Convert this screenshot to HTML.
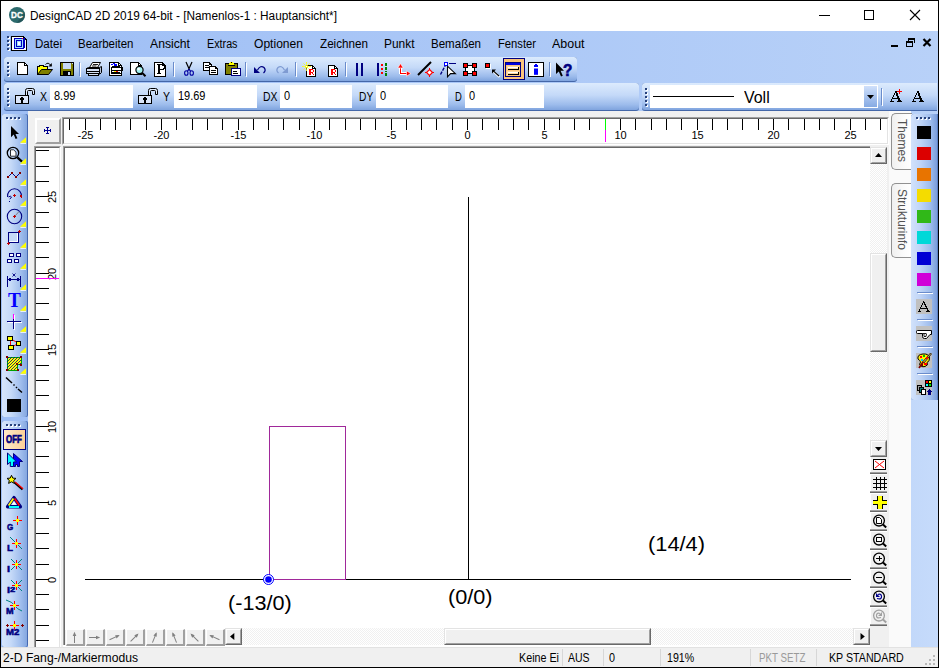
<!DOCTYPE html>
<html><head><meta charset="utf-8"><title>DesignCAD 2D 2019</title>
<style>
html,body{margin:0;padding:0;}
body{width:939px;height:668px;overflow:hidden;position:relative;background:#fff;font-family:"Liberation Sans",sans-serif;}
body div,body svg{position:absolute;box-sizing:border-box;}
.t{white-space:nowrap;}
</style></head>
<body>
<div style="left:0px;top:0px;width:939px;height:668px;background:#000;"></div>
<div style="left:1px;top:1px;width:937px;height:30px;background:#fff;"></div>
<div style="left:1px;top:31px;width:937px;height:636px;background:linear-gradient(90deg,#9ebef5 0%,#b8d1f8 100%);"></div>
<div class="t" style="left:30px;top:9.64px;font:normal 12px/13.40px 'Liberation Sans',sans-serif;color:#000;transform:scaleX(0.9856);transform-origin:0 0;">DesignCAD 2D 2019 64-bit - [Namenlos-1 : Hauptansicht*]</div>
<svg style="left:815px;top:5px;" width="110" height="20" viewBox="0 0 110 20" shape-rendering="crispEdges"><rect x="4" y="10" width="11" height="1" fill="#000"/><rect x="49.5" y="5.5" width="9" height="9" fill="none" stroke="#000" stroke-width="1"/><path d="M95 5 L105 15 M105 5 L95 15" stroke="#000" stroke-width="1.1" fill="none" shape-rendering="auto"/></svg>
<div class="t" style="left:35px;top:37.74px;font:normal 12px/13.40px 'Liberation Sans',sans-serif;color:#000;transform:scaleX(0.9638);transform-origin:0 0;">Datei</div>
<div class="t" style="left:78px;top:37.74px;font:normal 12px/13.40px 'Liberation Sans',sans-serif;color:#000;transform:scaleX(0.9562);transform-origin:0 0;">Bearbeiten</div>
<div class="t" style="left:150px;top:37.74px;font:normal 12px/13.40px 'Liberation Sans',sans-serif;color:#000;transform:scaleX(1.0165);transform-origin:0 0;">Ansicht</div>
<div class="t" style="left:206.5px;top:37.74px;font:normal 12px/13.40px 'Liberation Sans',sans-serif;color:#000;transform:scaleX(0.8968);transform-origin:0 0;">Extras</div>
<div class="t" style="left:253.5px;top:37.74px;font:normal 12px/13.40px 'Liberation Sans',sans-serif;color:#000;transform:scaleX(1.0061);transform-origin:0 0;">Optionen</div>
<div class="t" style="left:319.5px;top:37.74px;font:normal 12px/13.40px 'Liberation Sans',sans-serif;color:#000;transform:scaleX(0.9723);transform-origin:0 0;">Zeichnen</div>
<div class="t" style="left:384px;top:37.74px;font:normal 12px/13.40px 'Liberation Sans',sans-serif;color:#000;transform:scaleX(0.9939);transform-origin:0 0;">Punkt</div>
<div class="t" style="left:431px;top:37.74px;font:normal 12px/13.40px 'Liberation Sans',sans-serif;color:#000;transform:scaleX(0.9611);transform-origin:0 0;">Bemaßen</div>
<div class="t" style="left:497.5px;top:37.74px;font:normal 12px/13.40px 'Liberation Sans',sans-serif;color:#000;transform:scaleX(0.9341);transform-origin:0 0;">Fenster</div>
<div class="t" style="left:551.5px;top:37.74px;font:normal 12px/13.40px 'Liberation Sans',sans-serif;color:#000;transform:scaleX(1.0364);transform-origin:0 0;">About</div>
<svg style="left:888px;top:36px;" width="46" height="14" viewBox="0 0 46 14" shape-rendering="crispEdges"><rect x="3" y="9" width="7" height="2" fill="#000"/><rect x="20" y="2" width="7" height="1" fill="#000"/><rect x="20" y="3" width="7" height="1" fill="#000"/><rect x="20" y="4" width="1" height="2" fill="#000"/><rect x="26" y="4" width="1" height="3" fill="#000"/><rect x="18" y="5" width="7" height="2" fill="#000"/><rect x="18" y="7" width="1" height="4" fill="#000"/><rect x="24" y="7" width="1" height="4" fill="#000"/><rect x="18" y="10" width="7" height="1" fill="#000"/><path d="M35.5 3 L42.5 10 M42.5 3 L35.5 10" stroke="#000" stroke-width="2.2" fill="none" shape-rendering="auto"/></svg>
<svg style="left:8px;top:6px;" width="18" height="18" viewBox="0 0 18 18" shape-rendering="crispEdges"><circle cx="9" cy="9" r="8" fill="#2c6a6c" shape-rendering="auto"/><path d="M9 17 A8 8 0 0 0 16.5 6 L12 12 Z" fill="#1f4f52" opacity=".7" shape-rendering="auto"/></svg>
<div class="t" style="left:11px;top:10.61px;font:bold 8.5px/9.49px 'Liberation Sans',sans-serif;color:#fff;transform:scaleX(0.9612);transform-origin:0 0;-webkit-text-stroke:.3px #fff;">DC</div>
<svg style="left:7px;top:36px;" width="3" height="16" viewBox="0 0 3 16" shape-rendering="crispEdges"><rect x="1" y="1" width="2" height="2" fill="#fff"/><rect x="0" y="0" width="2" height="2" fill="#27417a"/><rect x="1" y="5" width="2" height="2" fill="#fff"/><rect x="0" y="4" width="2" height="2" fill="#27417a"/><rect x="1" y="9" width="2" height="2" fill="#fff"/><rect x="0" y="8" width="2" height="2" fill="#27417a"/><rect x="1" y="13" width="2" height="2" fill="#fff"/><rect x="0" y="12" width="2" height="2" fill="#27417a"/></svg>
<svg style="left:11px;top:35px;" width="17" height="17" viewBox="0 0 17 17" shape-rendering="crispEdges"><path d="M.5 1.5 H12.5 L15.5 4.5 V15.5 H.5 Z" fill="#fff" stroke="#000" stroke-width="1"/><path d="M12.5 1.5 V4.5 H15.5" fill="none" stroke="#000" stroke-width="1"/><rect x="3" y="3" width="10" height="11" fill="#0000c0"/><rect x="4" y="4" width="8" height="9" fill="#a0e0ff"/><rect x="5" y="5" width="6" height="7" fill="#0000c0"/><rect x="6" y="6" width="4" height="5" fill="#a0e0ff"/><rect x="7" y="7" width="2" height="3" fill="#fff"/><rect x="13" y="3" width="1" height="10" fill="#0000c0"/><rect x="11" y="3" width="1" height="1" fill="#ff0000"/></svg>
<div style="left:4px;top:57px;width:573px;height:25px;background:#4467a8;border-radius:3px 3px 3px 3px;"></div>
<div style="left:4px;top:57px;width:573px;height:24px;background:linear-gradient(180deg,#dcebfd 0%,#c4d9f8 45%,#9dbcec 80%,#7fa4de 100%);border-radius:3px 3px 3px 3px;"></div>
<svg style="left:7px;top:62px;" width="3" height="16" viewBox="0 0 3 16" shape-rendering="crispEdges"><rect x="1" y="1" width="2" height="2" fill="#fff"/><rect x="0" y="0" width="2" height="2" fill="#27417a"/><rect x="1" y="5" width="2" height="2" fill="#fff"/><rect x="0" y="4" width="2" height="2" fill="#27417a"/><rect x="1" y="9" width="2" height="2" fill="#fff"/><rect x="0" y="8" width="2" height="2" fill="#27417a"/><rect x="1" y="13" width="2" height="2" fill="#fff"/><rect x="0" y="12" width="2" height="2" fill="#27417a"/></svg>
<div style="left:79px;top:62px;width:1px;height:14px;background:#6a8ccb;"></div>
<div style="left:80px;top:63px;width:1px;height:14px;background:#fff;"></div>
<div style="left:173px;top:62px;width:1px;height:14px;background:#6a8ccb;"></div>
<div style="left:174px;top:63px;width:1px;height:14px;background:#fff;"></div>
<div style="left:245px;top:62px;width:1px;height:14px;background:#6a8ccb;"></div>
<div style="left:246px;top:63px;width:1px;height:14px;background:#fff;"></div>
<div style="left:295px;top:62px;width:1px;height:14px;background:#6a8ccb;"></div>
<div style="left:296px;top:63px;width:1px;height:14px;background:#fff;"></div>
<div style="left:345px;top:62px;width:1px;height:14px;background:#6a8ccb;"></div>
<div style="left:346px;top:63px;width:1px;height:14px;background:#fff;"></div>
<div style="left:549px;top:62px;width:1px;height:14px;background:#6a8ccb;"></div>
<div style="left:550px;top:63px;width:1px;height:14px;background:#fff;"></div>
<svg style="left:15px;top:60px;" width="16" height="18" viewBox="0 0 16 18" shape-rendering="crispEdges"><path d="M2.5 2.5 H9.5 L12.5 5.5 V14.5 H2.5 Z" fill="#fff" stroke="#000" stroke-width="1" shape-rendering="crispEdges"/><path d="M9.5 2.5 V5.5 H12.5" fill="none" stroke="#000" stroke-width="1"/></svg>
<svg style="left:36px;top:60px;" width="18" height="18" viewBox="0 0 18 18" shape-rendering="crispEdges"><path d="M1.5 14.5 V6.5 H3 L4 5.5 H7 L8 6.5 H11.5 V9.5" fill="#ffff00" stroke="#000" stroke-width="1"/><path d="M1.5 14.5 L5.5 9.5 H16.5 L12.5 14.5 Z" fill="#808000" stroke="#000" stroke-width="1" shape-rendering="auto"/><path d="M9.5 4.5 Q12 1.5 15 5.5" fill="none" stroke="#000" stroke-width="1" shape-rendering="auto"/><path d="M15.8 3 V6.6 H12.4 Z" fill="#000" shape-rendering="auto"/></svg>
<svg style="left:59px;top:60px;" width="18" height="18" viewBox="0 0 18 18" shape-rendering="crispEdges"><rect x="1" y="2" width="14" height="14" fill="#000"/><rect x="2" y="3" width="12" height="12" fill="#808000"/><rect x="4" y="3" width="8" height="6" fill="#c6d9f7"/><rect x="13" y="3" width="1" height="1" fill="#c6d9f7"/><rect x="4" y="11" width="8" height="4" fill="#000"/><rect x="9" y="12" width="2" height="3" fill="#c6d9f7"/></svg>
<svg style="left:85px;top:60px;" width="18" height="18" viewBox="0 0 18 18" shape-rendering="crispEdges"><path d="M4.5 7.5 L7.5 2.5 H15.5 L12.5 7.5 Z" fill="#fff" stroke="#000" shape-rendering="auto"/><path d="M8 4.5 H13 M7 6 H11.5" stroke="#000" stroke-width=".9" shape-rendering="auto"/><path d="M1.5 8.5 L3.5 7.5 H14.5 L16.5 6.5 V12.5 L14.5 14.5" fill="#b8c4d8" stroke="#000" shape-rendering="auto"/><rect x="1.5" y="8.5" width="13" height="5" fill="#d4e0f5" stroke="#000"/><rect x="2" y="11" width="12" height="1" fill="#000"/><rect x="3.5" y="13.5" width="10" height="2" fill="#d4e0f5" stroke="#000"/></svg>
<svg style="left:108px;top:60px;" width="18" height="18" viewBox="0 0 18 18" shape-rendering="crispEdges"><path d="M1.5 2.5 H10.5 L13.5 5.5 V15.5 H1.5 Z" fill="#fff" stroke="#000" stroke-width="1" shape-rendering="crispEdges"/><path d="M10.5 2.5 V5.5 H13.5" fill="none" stroke="#000" stroke-width="1"/><rect x="3" y="4" width="2" height="1" fill="#0000ff"/><rect x="5" y="3" width="2" height="1" fill="#0000ff"/><rect x="6" y="4" width="3" height="2" fill="#0000ff"/><rect x="3.5" y="7.5" width="10" height="6" fill="#fff" stroke="#000"/><rect x="4" y="6" width="8" height="1" fill="#000"/><rect x="3" y="10" width="11" height="1" fill="#000"/><rect x="14" y="7" width="1" height="4" fill="#000"/><rect x="4" y="12" width="8" height="1" fill="#000"/><rect x="6" y="11" width="2" height="1" fill="#ffff00"/><rect x="8" y="11" width="2" height="1" fill="#ff0000"/></svg>
<svg style="left:129px;top:60px;" width="20" height="20" viewBox="0 0 20 20" shape-rendering="crispEdges"><path d="M1.5 2.5 H9.5 L12.5 5.5 V14.5 H1.5 Z" fill="#fff" stroke="#000" stroke-width="1" shape-rendering="crispEdges"/><path d="M9.5 2.5 V5.5 H12.5" fill="none" stroke="#000" stroke-width="1"/><circle cx="10.5" cy="10" r="3.6" fill="#a0f0f0" stroke="#000" stroke-width="1.2" shape-rendering="auto"/><circle cx="9.6" cy="9" r="1.3" fill="#fff" shape-rendering="auto"/><path d="M13 12.8 L16.5 16.3" stroke="#000" stroke-width="2" shape-rendering="auto"/></svg>
<svg style="left:152px;top:60px;" width="18" height="20" viewBox="0 0 18 20" shape-rendering="crispEdges"><path d="M2.5 2.5 H10.5 L13.5 5.5 V16.5 H2.5 Z" fill="#fff" stroke="#000" stroke-width="1" shape-rendering="crispEdges"/><path d="M10.5 2.5 V5.5 H13.5" fill="none" stroke="#000" stroke-width="1"/></svg>
<svg style="left:157px;top:64px;" width="9" height="10" viewBox="0 0 9 10" shape-rendering="crispEdges"><rect x="0" y="0" width="7" height="1" fill="#000"/><rect x="1" y="1" width="2" height="1" fill="#000"/><rect x="6" y="1" width="2" height="1" fill="#000"/><rect x="1" y="2" width="2" height="1" fill="#000"/><rect x="7" y="2" width="2" height="1" fill="#000"/><rect x="1" y="3" width="2" height="1" fill="#000"/><rect x="7" y="3" width="2" height="1" fill="#000"/><rect x="1" y="4" width="2" height="1" fill="#000"/><rect x="6" y="4" width="2" height="1" fill="#000"/><rect x="1" y="5" width="6" height="1" fill="#000"/><rect x="1" y="6" width="2" height="1" fill="#000"/><rect x="1" y="7" width="2" height="1" fill="#000"/><rect x="1" y="8" width="2" height="1" fill="#000"/><rect x="0" y="9" width="4" height="1" fill="#000"/></svg>
<svg style="left:182px;top:60px;" width="14" height="18" viewBox="0 0 14 18" shape-rendering="crispEdges"><path d="M4 2 L7.6 10 M10 2 L6.4 10" stroke="#000" stroke-width="1.2" fill="none" shape-rendering="auto"/><ellipse cx="4.3" cy="13" rx="1.7" ry="2.3" fill="none" stroke="#0000a0" stroke-width="1.1" shape-rendering="auto"/><ellipse cx="9.7" cy="13" rx="1.7" ry="2.3" fill="none" stroke="#0000a0" stroke-width="1.1" shape-rendering="auto"/><path d="M5.4 11.2 L7 9.4 L8.6 11.2" stroke="#0000a0" stroke-width="1.1" fill="none" shape-rendering="auto"/></svg>
<svg style="left:202px;top:60px;" width="18" height="18" viewBox="0 0 18 18" shape-rendering="crispEdges"><path d="M1.5 2.5 H7.5 L9.5 4.5 V10.5 H1.5 Z" fill="#fff" stroke="#000" stroke-width="1" shape-rendering="crispEdges"/><path d="M7.5 2.5 V4.5 H9.5" fill="none" stroke="#000" stroke-width="1"/><rect x="3" y="5" width="4" height="1" fill="#000"/><rect x="3" y="7" width="4" height="1" fill="#000"/><path d="M7.5 6.5 H13.5 L15.5 8.5 V14.5 H7.5 Z" fill="#fff" stroke="#000" stroke-width="1" shape-rendering="crispEdges"/><path d="M13.5 6.5 V8.5 H15.5" fill="none" stroke="#000" stroke-width="1"/><rect x="9" y="10" width="5" height="1" fill="#000"/><rect x="9" y="12" width="5" height="1" fill="#000"/></svg>
<svg style="left:224px;top:60px;" width="18" height="18" viewBox="0 0 18 18" shape-rendering="crispEdges"><rect x="1.5" y="3.5" width="12" height="11" rx="1" fill="#808000" stroke="#000"/><rect x="5" y="3" width="5" height="2" fill="#ffff00"/><rect x="6" y="2" width="3" height="1" fill="#ffff00"/><rect x="4" y="5" width="7" height="1" fill="#000"/><rect x="7" y="2" width="1" height="1" fill="#000"/><rect x="7.5" y="8.5" width="9" height="7" fill="#fff" stroke="#000080"/><rect x="9" y="11" width="4" height="1" fill="#000"/><rect x="9" y="13" width="5" height="1" fill="#000"/></svg>
<svg style="left:252px;top:63px;" width="16" height="12" viewBox="0 0 16 12" shape-rendering="crispEdges"><path d="M2 4 V10 H8 Z" fill="#000080" shape-rendering="auto"/><path d="M5.5 7 Q8.5 1.8 12 4.5 Q14.5 7.5 11.5 10" fill="none" stroke="#000080" stroke-width="1.25" shape-rendering="auto"/></svg>
<svg style="left:274px;top:63px;" width="16" height="12" viewBox="0 0 16 12" shape-rendering="crispEdges"><path d="M14 4 V10 H8 Z" fill="#7f9bd2" shape-rendering="auto"/><path d="M10.5 7 Q7.5 1.8 4 4.5 Q1.5 7.5 4.5 10" fill="none" stroke="#7f9bd2" stroke-width="1.25" shape-rendering="auto"/></svg>
<svg style="left:300px;top:60px;" width="20" height="20" viewBox="0 0 20 20" shape-rendering="crispEdges"><path d="M6.5 5.5 H12.5 L15.5 8.5 V16.5 H6.5 Z" fill="#fff" stroke="#000" stroke-width="1" shape-rendering="crispEdges"/><path d="M12.5 5.5 V8.5 H15.5" fill="none" stroke="#000" stroke-width="1"/><path d="M3.5 3.5 L9.5 9.5 M6.5 2 V11 M2 6.5 H11 M9.5 3.5 L3.5 9.5" stroke="#ffff00" stroke-width=".9" stroke-dasharray="1.8 .6" shape-rendering="auto"/><rect x="6" y="6" width="1" height="1" fill="#fff"/></svg>
<svg style="left:309px;top:69px;" width="5" height="6" viewBox="0 0 5 6" shape-rendering="crispEdges"><rect x="0" y="0" width="4" height="1" fill="#ff0000"/><rect x="0" y="1" width="2" height="1" fill="#ff0000"/><rect x="4" y="1" width="1" height="1" fill="#ff0000"/><rect x="0" y="2" width="2" height="1" fill="#ff0000"/><rect x="4" y="2" width="1" height="1" fill="#ff0000"/><rect x="0" y="3" width="4" height="1" fill="#ff0000"/><rect x="0" y="4" width="2" height="1" fill="#ff0000"/><rect x="3" y="4" width="1" height="1" fill="#ff0000"/><rect x="0" y="5" width="2" height="1" fill="#ff0000"/><rect x="4" y="5" width="1" height="1" fill="#ff0000"/></svg>
<svg style="left:326px;top:60px;" width="16" height="20" viewBox="0 0 16 20" shape-rendering="crispEdges"><path d="M2.5 5.5 H8.5 L11.5 8.5 V16.5 H2.5 Z" fill="#fff" stroke="#000" stroke-width="1" shape-rendering="crispEdges"/><path d="M8.5 5.5 V8.5 H11.5" fill="none" stroke="#000" stroke-width="1"/></svg>
<svg style="left:331px;top:69px;" width="5" height="6" viewBox="0 0 5 6" shape-rendering="crispEdges"><rect x="0" y="0" width="4" height="1" fill="#ff0000"/><rect x="0" y="1" width="2" height="1" fill="#ff0000"/><rect x="4" y="1" width="1" height="1" fill="#ff0000"/><rect x="0" y="2" width="2" height="1" fill="#ff0000"/><rect x="4" y="2" width="1" height="1" fill="#ff0000"/><rect x="0" y="3" width="4" height="1" fill="#ff0000"/><rect x="0" y="4" width="2" height="1" fill="#ff0000"/><rect x="3" y="4" width="1" height="1" fill="#ff0000"/><rect x="0" y="5" width="2" height="1" fill="#ff0000"/><rect x="4" y="5" width="1" height="1" fill="#ff0000"/></svg>
<svg style="left:355px;top:62px;" width="10" height="15" viewBox="0 0 10 15" shape-rendering="crispEdges"><rect x="1" y="1" width="2" height="13" fill="#000080"/><rect x="6" y="1" width="2" height="13" fill="#000080"/></svg>
<svg style="left:376px;top:62px;" width="14" height="15" viewBox="0 0 14 15" shape-rendering="crispEdges"><rect x="1" y="1" width="2" height="13" fill="#000080"/><rect x="5" y="2" width="2" height="2" fill="#ff0000"/><rect x="5" y="6" width="2" height="2" fill="#ff0000"/><rect x="5" y="10" width="2" height="2" fill="#ff0000"/><rect x="9" y="1" width="2" height="3" fill="#008000"/><rect x="9" y="5" width="2" height="3" fill="#008000"/><rect x="9" y="9" width="2" height="1" fill="#008000"/><rect x="9" y="11" width="2" height="3" fill="#008000"/></svg>
<svg style="left:396px;top:62px;" width="18" height="18" viewBox="0 0 18 18" shape-rendering="crispEdges"><path d="M4 11.5 H13 M4.5 3 V12" stroke="#fff" stroke-width="3" fill="none"/><path d="M4.5 3 V11.5 H12" stroke="#ff0000" stroke-width="1.4" fill="none"/><path d="M4.5 1.5 L1.8 6 H7.2 Z M14.8 11.5 L10.5 8.8 V14.2 Z" fill="#ff0000" stroke="#fff" stroke-width=".6" shape-rendering="auto"/></svg>
<svg style="left:416px;top:60px;" width="20" height="18" viewBox="0 0 20 18" shape-rendering="crispEdges"><path d="M2 15 L15 2" stroke="#000" stroke-width="2" shape-rendering="auto"/><path d="M13.5 8 V17 M9 12.5 H18" stroke="#ff0000" stroke-width="1" /><path d="M13.5 9.5 L16.5 12.5 L13.5 15.5 L10.5 12.5 Z" fill="#fff" stroke="#ff0000" stroke-width="1.2" shape-rendering="auto"/></svg>
<svg style="left:438px;top:60px;" width="20" height="18" viewBox="0 0 20 18" shape-rendering="crispEdges"><path d="M2.5 14.5 L7.3 5.5" stroke="#000080" stroke-width="1.4" stroke-dasharray="3.2 1.2" shape-rendering="auto"/><rect x="6.5" y="2.5" width="3" height="3" fill="#fff" stroke="#0000ff"/><rect x="11" y="3" width="7" height="1" fill="#000080"/><path d="M9.5 6.2 V16.8 L12.6 13.6 H17.4 Z" fill="#fff" stroke="#000" stroke-width="1.1" stroke-linejoin="miter" shape-rendering="auto"/></svg>
<svg style="left:462px;top:62px;" width="16" height="15" viewBox="0 0 16 15" shape-rendering="crispEdges"><rect x="3.5" y="3.5" width="9" height="8" fill="#fff" stroke="#000" stroke-width="1"/><rect x="1.5" y="1.5" width="4" height="4" fill="#ff0000" stroke="#000"/><rect x="10.5" y="1.5" width="4" height="4" fill="#ff0000" stroke="#000"/><rect x="1.5" y="9.5" width="4" height="4" fill="#ff0000" stroke="#000"/><rect x="10.5" y="9.5" width="4" height="4" fill="#ff0000" stroke="#000"/></svg>
<svg style="left:483px;top:62px;" width="18" height="16" viewBox="0 0 18 16" shape-rendering="crispEdges"><rect x="2.5" y="1.5" width="4" height="4" fill="#ff0000" stroke="#000"/><path d="M3 6.5 H7.5 V2" stroke="#fff" stroke-width="1" fill="none"/><path d="M10.5 9.5 L16.5 15" stroke="#fff" stroke-width="2" shape-rendering="auto"/><path d="M10 8.6 L16 14" stroke="#000" stroke-width="1.1" shape-rendering="auto"/><path d="M9 7.6 H13 L9 11.4 Z" fill="#000" shape-rendering="auto"/></svg>
<div style="left:503px;top:58px;width:22px;height:22px;background:#fbc57d;border:1px solid #000080;"></div>
<svg style="left:504px;top:60px;" width="19" height="18" viewBox="0 0 19 18" shape-rendering="crispEdges"><rect x="1" y="2" width="16" height="15" fill="#000080"/><rect x="2" y="3" width="14" height="2" fill="#0000e0"/><rect x="2" y="5" width="14" height="11" fill="#fbc57d"/><rect x="3" y="6" width="12" height="4" fill="#fdd8a0"/><rect x="3" y="11" width="12" height="4" fill="#fdd8a0"/><rect x="4" y="9" width="11" height="1" fill="#000"/><rect x="14" y="7" width="1" height="3" fill="#000"/><rect x="4" y="14" width="11" height="1" fill="#000"/><rect x="14" y="12" width="1" height="3" fill="#000"/><rect x="4" y="7" width="10" height="1" fill="#fff"/><rect x="4" y="12" width="10" height="1" fill="#fff"/></svg>
<svg style="left:527px;top:61px;" width="18" height="17" viewBox="0 0 18 17" shape-rendering="crispEdges"><rect x="1.5" y="1.5" width="15" height="14" fill="#fff" stroke="#000"/><rect x="8" y="3" width="2" height="1" fill="#0000ff"/><rect x="7" y="4" width="4" height="2" fill="#0000ff"/><rect x="7" y="7.5" width="4" height="6.3" fill="#0000ff" shape-rendering="auto"/></svg>
<svg style="left:554px;top:61px;" width="12" height="18" viewBox="0 0 12 18" shape-rendering="crispEdges"><path d="M2 1.5 V13 L4.8 10.5 L7 15.5 L8.8 14.7 L6.6 9.8 H10 Z" fill="#000" shape-rendering="auto"/></svg>
<div class="t" style="left:562.8px;top:60.97px;font:bold 16.5px/18.43px 'Liberation Sans',sans-serif;color:#000080;transform:scaleX(0.9326);transform-origin:0 0;-webkit-text-stroke:.6px #000080;">?</div>
<div style="left:4px;top:83px;width:635px;height:28px;background:#4467a8;border-radius:3px 3px 3px 3px;"></div>
<div style="left:4px;top:83px;width:635px;height:27px;background:linear-gradient(180deg,#dcebfd 0%,#c4d9f8 45%,#9dbcec 80%,#7fa4de 100%);border-radius:3px 3px 3px 3px;"></div>
<svg style="left:7px;top:88px;" width="3" height="20" viewBox="0 0 3 20" shape-rendering="crispEdges"><rect x="1" y="1" width="2" height="2" fill="#fff"/><rect x="0" y="0" width="2" height="2" fill="#27417a"/><rect x="1" y="5" width="2" height="2" fill="#fff"/><rect x="0" y="4" width="2" height="2" fill="#27417a"/><rect x="1" y="9" width="2" height="2" fill="#fff"/><rect x="0" y="8" width="2" height="2" fill="#27417a"/><rect x="1" y="13" width="2" height="2" fill="#fff"/><rect x="0" y="12" width="2" height="2" fill="#27417a"/><rect x="1" y="17" width="2" height="2" fill="#fff"/><rect x="0" y="16" width="2" height="2" fill="#27417a"/></svg>
<svg style="left:14px;top:87px;" width="23" height="18" viewBox="0 0 23 18" shape-rendering="crispEdges"><path d="M11.5 8 V3.5 Q11.5 1.5 13.5 1.5 H18.5 Q20.5 1.5 20.5 3.5 V7.5 H18.5 V4.5 Q18.5 3.5 17.5 3.5 H14.5 Q13.5 3.5 13.5 4.5 V8" fill="#e4edfb" stroke="#000" stroke-width="1" shape-rendering="auto"/><rect x="1.5" y="8.5" width="13" height="8" fill="#dbe6f9" stroke="#000" stroke-width="1"/><rect x="7" y="10" width="2" height="1" fill="#000"/><rect x="6" y="11" width="4" height="2" fill="#000"/><rect x="7" y="13" width="2" height="3" fill="#000"/></svg>
<svg style="left:137px;top:87px;" width="23" height="18" viewBox="0 0 23 18" shape-rendering="crispEdges"><path d="M11.5 8 V3.5 Q11.5 1.5 13.5 1.5 H18.5 Q20.5 1.5 20.5 3.5 V7.5 H18.5 V4.5 Q18.5 3.5 17.5 3.5 H14.5 Q13.5 3.5 13.5 4.5 V8" fill="#e4edfb" stroke="#000" stroke-width="1" shape-rendering="auto"/><rect x="1.5" y="8.5" width="13" height="8" fill="#dbe6f9" stroke="#000" stroke-width="1"/><rect x="7" y="10" width="2" height="1" fill="#000"/><rect x="6" y="11" width="4" height="2" fill="#000"/><rect x="7" y="13" width="2" height="3" fill="#000"/></svg>
<div class="t" style="left:40px;top:90.74px;font:normal 12px/13.40px 'Liberation Sans',sans-serif;color:#000;transform:scaleX(0.8746);transform-origin:0 0;">X</div>
<div style="left:50px;top:85px;width:83px;height:23px;background:#fff;"></div>
<div class="t" style="left:53.5px;top:89.74px;font:normal 12px/13.40px 'Liberation Sans',sans-serif;color:#000;transform:scaleX(0.9150);transform-origin:0 0;">8.99</div>
<div class="t" style="left:163px;top:90.74px;font:normal 12px/13.40px 'Liberation Sans',sans-serif;color:#000;transform:scaleX(0.8746);transform-origin:0 0;">Y</div>
<div style="left:174px;top:85px;width:83px;height:23px;background:#fff;"></div>
<div class="t" style="left:177.5px;top:89.74px;font:normal 12px/13.40px 'Liberation Sans',sans-serif;color:#000;transform:scaleX(0.9150);transform-origin:0 0;">19.69</div>
<div class="t" style="left:262.8px;top:90.74px;font:normal 12px/13.40px 'Liberation Sans',sans-serif;color:#000;transform:scaleX(0.8638);transform-origin:0 0;">DX</div>
<div style="left:280px;top:85px;width:72px;height:23px;background:#fff;"></div>
<div class="t" style="left:283.5px;top:89.74px;font:normal 12px/13.40px 'Liberation Sans',sans-serif;color:#000;transform:scaleX(0.9150);transform-origin:0 0;">0</div>
<div class="t" style="left:358.8px;top:90.74px;font:normal 12px/13.40px 'Liberation Sans',sans-serif;color:#000;transform:scaleX(0.8518);transform-origin:0 0;">DY</div>
<div style="left:376px;top:85px;width:72px;height:23px;background:#fff;"></div>
<div class="t" style="left:379.5px;top:89.74px;font:normal 12px/13.40px 'Liberation Sans',sans-serif;color:#000;transform:scaleX(0.9150);transform-origin:0 0;">0</div>
<div class="t" style="left:454.7px;top:90.74px;font:normal 12px/13.40px 'Liberation Sans',sans-serif;color:#000;transform:scaleX(0.7847);transform-origin:0 0;">D</div>
<div style="left:465px;top:85px;width:79px;height:23px;background:#fff;"></div>
<div class="t" style="left:468.5px;top:89.74px;font:normal 12px/13.40px 'Liberation Sans',sans-serif;color:#000;transform:scaleX(0.9150);transform-origin:0 0;">0</div>
<div style="left:642px;top:83px;width:295px;height:28px;background:#4467a8;border-radius:3px 0px 0px 3px;"></div>
<div style="left:642px;top:83px;width:295px;height:27px;background:linear-gradient(180deg,#dcebfd 0%,#c4d9f8 45%,#9dbcec 80%,#7fa4de 100%);border-radius:3px 0px 0px 3px;"></div>
<svg style="left:645px;top:88px;" width="3" height="20" viewBox="0 0 3 20" shape-rendering="crispEdges"><rect x="1" y="1" width="2" height="2" fill="#fff"/><rect x="0" y="0" width="2" height="2" fill="#27417a"/><rect x="1" y="5" width="2" height="2" fill="#fff"/><rect x="0" y="4" width="2" height="2" fill="#27417a"/><rect x="1" y="9" width="2" height="2" fill="#fff"/><rect x="0" y="8" width="2" height="2" fill="#27417a"/><rect x="1" y="13" width="2" height="2" fill="#fff"/><rect x="0" y="12" width="2" height="2" fill="#27417a"/><rect x="1" y="17" width="2" height="2" fill="#fff"/><rect x="0" y="16" width="2" height="2" fill="#27417a"/></svg>
<div style="left:650px;top:85px;width:228px;height:23px;background:#fff;"></div>
<div style="left:653px;top:96px;width:81px;height:1px;background:#000;"></div>
<div class="t" style="left:744px;top:88.72px;font:normal 16px/17.87px 'Liberation Sans',sans-serif;color:#000;transform:scaleX(0.9962);transform-origin:0 0;">Voll</div>
<div style="left:864px;top:86px;width:13px;height:21px;background:linear-gradient(180deg,#cfe0fb,#86aae3);"></div>
<svg style="left:866px;top:94px;" width="9" height="6" viewBox="0 0 9 6" shape-rendering="crispEdges"><path d="M1 1 H8 L4.5 5 Z" fill="#000" shape-rendering="auto"/></svg>
<div style="left:881px;top:88px;width:1px;height:17px;background:#6a8ccb;"></div>
<div style="left:882px;top:89px;width:1px;height:17px;background:#fff;"></div>
<svg style="left:890px;top:91px;" width="12" height="11" viewBox="0 0 12 11" shape-rendering="crispEdges"><rect x="5" y="0" width="2" height="1" fill="#000"/><rect x="5" y="1" width="2" height="1" fill="#000"/><rect x="4" y="2" width="1" height="1" fill="#000"/><rect x="6" y="2" width="2" height="1" fill="#000"/><rect x="4" y="3" width="1" height="1" fill="#000"/><rect x="6" y="3" width="2" height="1" fill="#000"/><rect x="3" y="4" width="1" height="1" fill="#000"/><rect x="6" y="4" width="2" height="1" fill="#000"/><rect x="3" y="5" width="1" height="1" fill="#000"/><rect x="7" y="5" width="2" height="1" fill="#000"/><rect x="2" y="6" width="1" height="1" fill="#000"/><rect x="7" y="6" width="2" height="1" fill="#000"/><rect x="2" y="7" width="8" height="1" fill="#000"/><rect x="1" y="8" width="1" height="1" fill="#000"/><rect x="8" y="8" width="2" height="1" fill="#000"/><rect x="1" y="9" width="1" height="1" fill="#000"/><rect x="8" y="9" width="3" height="1" fill="#000"/><rect x="0" y="10" width="4" height="1" fill="#000"/><rect x="7" y="10" width="5" height="1" fill="#000"/></svg>
<svg style="left:897px;top:89px;" width="5" height="5" viewBox="0 0 5 5" shape-rendering="crispEdges"><rect x="2" y="0" width="1" height="5" fill="#ff0000"/><rect x="0" y="2" width="5" height="1" fill="#ff0000"/></svg>
<svg style="left:912px;top:91px;" width="12" height="11" viewBox="0 0 12 11" shape-rendering="crispEdges"><rect x="5" y="0" width="2" height="1" fill="#000"/><rect x="5" y="1" width="2" height="1" fill="#000"/><rect x="4" y="2" width="1" height="1" fill="#000"/><rect x="6" y="2" width="2" height="1" fill="#000"/><rect x="4" y="3" width="1" height="1" fill="#000"/><rect x="6" y="3" width="2" height="1" fill="#000"/><rect x="3" y="4" width="1" height="1" fill="#000"/><rect x="6" y="4" width="2" height="1" fill="#000"/><rect x="3" y="5" width="1" height="1" fill="#000"/><rect x="7" y="5" width="2" height="1" fill="#000"/><rect x="2" y="6" width="1" height="1" fill="#000"/><rect x="7" y="6" width="2" height="1" fill="#000"/><rect x="2" y="7" width="8" height="1" fill="#000"/><rect x="1" y="8" width="1" height="1" fill="#000"/><rect x="8" y="8" width="2" height="1" fill="#000"/><rect x="1" y="9" width="1" height="1" fill="#000"/><rect x="8" y="9" width="3" height="1" fill="#000"/><rect x="0" y="10" width="4" height="1" fill="#000"/><rect x="7" y="10" width="5" height="1" fill="#000"/></svg>
<div style="left:2px;top:114px;width:26px;height:303px;background:#4468b0;border-radius:2px;"></div>
<div style="left:2px;top:114px;width:25px;height:303px;background:linear-gradient(90deg,#d6e5fb 0%,#c6daf8 35%,#a3c0ee 72%,#84a7e0 100%);border-radius:2px;"></div>
<svg style="left:6px;top:117px;" width="16" height="3" viewBox="0 0 16 3" shape-rendering="crispEdges"><rect x="1" y="1" width="2" height="2" fill="#fff"/><rect x="0" y="0" width="2" height="2" fill="#27417a"/><rect x="5" y="1" width="2" height="2" fill="#fff"/><rect x="4" y="0" width="2" height="2" fill="#27417a"/><rect x="9" y="1" width="2" height="2" fill="#fff"/><rect x="8" y="0" width="2" height="2" fill="#27417a"/><rect x="13" y="1" width="2" height="2" fill="#fff"/><rect x="12" y="0" width="2" height="2" fill="#27417a"/></svg>
<svg style="left:9px;top:124px;" width="12" height="18" viewBox="0 0 12 18" shape-rendering="crispEdges"><path d="M2 2 V13.2 L4.7 10.6 L6.6 15 L8.4 14.2 L6.5 10 H10 Z" fill="#000" shape-rendering="auto"/></svg>
<svg style="left:19px;top:137px;" width="8" height="8" viewBox="0 0 8 8" shape-rendering="crispEdges"><path d="M7 6.3 H1.4" stroke="#fff" stroke-width="1" shape-rendering="auto"/><path d="M7 0.3 V5.8 H1 Z" fill="#ffff00" shape-rendering="auto"/></svg>
<svg style="left:5px;top:145px;" width="20" height="20" viewBox="0 0 20 20" shape-rendering="crispEdges"><circle cx="8" cy="8" r="5.7" fill="none" stroke="#000" stroke-width="1.3" shape-rendering="auto"/><path d="M5.5 4.8 H8.6 L11 7.2 V11.2 H5.5 Z" fill="#fff" stroke="#000" stroke-width=".8" shape-rendering="auto"/><path d="M12.3 12.3 L17 16.6" stroke="#000" stroke-width="2.3" shape-rendering="auto"/></svg>
<svg style="left:19px;top:158px;" width="8" height="8" viewBox="0 0 8 8" shape-rendering="crispEdges"><path d="M7 6.3 H1.4" stroke="#fff" stroke-width="1" shape-rendering="auto"/><path d="M7 0.3 V5.8 H1 Z" fill="#ffff00" shape-rendering="auto"/></svg>
<svg style="left:4px;top:169px;" width="20" height="12" viewBox="0 0 20 12" shape-rendering="crispEdges"><path d="M4 8 L8 4 L12 8 L16 4" fill="none" stroke="#000080" stroke-width="1" shape-rendering="auto"/><rect x="3" y="7" width="2" height="2" fill="#800000"/><rect x="7" y="3" width="2" height="2" fill="#800000"/><rect x="11" y="7" width="2" height="2" fill="#800000"/><rect x="15" y="3" width="2" height="2" fill="#800000"/></svg>
<svg style="left:19px;top:179px;" width="8" height="8" viewBox="0 0 8 8" shape-rendering="crispEdges"><path d="M7 6.3 H1.4" stroke="#fff" stroke-width="1" shape-rendering="auto"/><path d="M7 0.3 V5.8 H1 Z" fill="#ffff00" shape-rendering="auto"/></svg>
<svg style="left:5px;top:186px;" width="20" height="18" viewBox="0 0 20 18" shape-rendering="crispEdges"><path d="M2.6 11 A7 7 0 1 1 16.4 11" fill="none" stroke="#000080" stroke-width="1.1" shape-rendering="auto"/><rect x="9" y="8" width="1" height="3" fill="#c00000"/><rect x="8" y="9" width="3" height="1" fill="#c00000"/><rect x="15" y="9" width="2" height="2" fill="#c00000"/><rect x="16" y="10" width="1" height="2" fill="#c00000"/><path d="M3.5 11 Q5.5 9.3 6.5 11 L4.8 13.2" fill="none" stroke="#000080" stroke-width="1" shape-rendering="auto"/><rect x="4" y="15" width="1" height="1" fill="#000080"/></svg>
<svg style="left:19px;top:200px;" width="8" height="8" viewBox="0 0 8 8" shape-rendering="crispEdges"><path d="M7 6.3 H1.4" stroke="#fff" stroke-width="1" shape-rendering="auto"/><path d="M7 0.3 V5.8 H1 Z" fill="#ffff00" shape-rendering="auto"/></svg>
<svg style="left:5px;top:207px;" width="20" height="20" viewBox="0 0 20 20" shape-rendering="crispEdges"><circle cx="9.5" cy="9.5" r="7.2" fill="none" stroke="#000080" stroke-width="1.1" shape-rendering="auto"/><path d="M10 9 L14 4.5" stroke="#808080" stroke-width="1" shape-rendering="auto"/><rect x="9" y="8" width="1" height="3" fill="#c00000"/><rect x="8" y="9" width="3" height="1" fill="#c00000"/></svg>
<svg style="left:19px;top:221px;" width="8" height="8" viewBox="0 0 8 8" shape-rendering="crispEdges"><path d="M7 6.3 H1.4" stroke="#fff" stroke-width="1" shape-rendering="auto"/><path d="M7 0.3 V5.8 H1 Z" fill="#ffff00" shape-rendering="auto"/></svg>
<svg style="left:5px;top:229px;" width="20" height="18" viewBox="0 0 20 18" shape-rendering="crispEdges"><rect x="5" y="5" width="9" height="9" fill="#fff"/><rect x="3.5" y="3.5" width="10" height="10" fill="none" stroke="#000080" stroke-width="1"/><rect x="4" y="4" width="9" height="9" fill="#c6d9f7"/><rect x="4" y="12" width="9" height="1" fill="#fff"/><rect x="12" y="4" width="1" height="9" fill="#fff"/><rect x="14" y="1" width="1" height="3" fill="#c00000"/><rect x="13" y="2" width="3" height="1" fill="#c00000"/><rect x="3" y="13" width="1" height="3" fill="#c00000"/><rect x="2" y="14" width="3" height="1" fill="#c00000"/></svg>
<svg style="left:19px;top:242px;" width="8" height="8" viewBox="0 0 8 8" shape-rendering="crispEdges"><path d="M7 6.3 H1.4" stroke="#fff" stroke-width="1" shape-rendering="auto"/><path d="M7 0.3 V5.8 H1 Z" fill="#ffff00" shape-rendering="auto"/></svg>
<svg style="left:5px;top:251px;" width="20" height="14" viewBox="0 0 20 14" shape-rendering="crispEdges"><rect x="4.5" y="2.5" width="4" height="3" fill="#fff" stroke="#000080"/><rect x="11.5" y="2.5" width="4" height="3" fill="#fff" stroke="#000080"/><rect x="2.5" y="8.5" width="4" height="3" fill="#fff" stroke="#000080"/><rect x="9.5" y="8.5" width="4" height="3" fill="#fff" stroke="#000080"/></svg>
<svg style="left:19px;top:263px;" width="8" height="8" viewBox="0 0 8 8" shape-rendering="crispEdges"><path d="M7 6.3 H1.4" stroke="#fff" stroke-width="1" shape-rendering="auto"/><path d="M7 0.3 V5.8 H1 Z" fill="#ffff00" shape-rendering="auto"/></svg>
<svg style="left:5px;top:272px;" width="20" height="16" viewBox="0 0 20 16" shape-rendering="crispEdges"><rect x="2" y="4" width="1" height="11" fill="#000080"/><rect x="15" y="4" width="1" height="11" fill="#000080"/><rect x="3" y="7" width="12" height="1" fill="#000080"/><rect x="4" y="6" width="1" height="3" fill="#000080"/><rect x="5" y="6" width="1" height="3" fill="#000080"/><rect x="13" y="6" width="1" height="3" fill="#000080"/><rect x="12" y="6" width="1" height="3" fill="#000080"/><path d="M7.5 1.5 L10.5 4.5 M10.5 1.5 L7.5 4.5" stroke="#000080" stroke-width=".9" shape-rendering="auto"/></svg>
<svg style="left:19px;top:284px;" width="8" height="8" viewBox="0 0 8 8" shape-rendering="crispEdges"><path d="M7 6.3 H1.4" stroke="#fff" stroke-width="1" shape-rendering="auto"/><path d="M7 0.3 V5.8 H1 Z" fill="#ffff00" shape-rendering="auto"/></svg>
<div class="t" style="left:7.7px;top:288.90px;font:bold 20px/22.34px 'Liberation Serif',sans-serif;color:#0000ff;transform:scaleX(0.9595);transform-origin:0 0;">T</div>
<svg style="left:19px;top:305px;" width="8" height="8" viewBox="0 0 8 8" shape-rendering="crispEdges"><path d="M7 6.3 H1.4" stroke="#fff" stroke-width="1" shape-rendering="auto"/><path d="M7 0.3 V5.8 H1 Z" fill="#ffff00" shape-rendering="auto"/></svg>
<svg style="left:5px;top:312px;" width="20" height="18" viewBox="0 0 20 18" shape-rendering="crispEdges"><rect x="9" y="3" width="1" height="15" fill="#fff"/><rect x="3" y="10" width="14" height="1" fill="#fff"/><rect x="8" y="2" width="1" height="15" fill="#000080"/><rect x="8" y="2" width="1" height="5" fill="#ff00ff"/><rect x="2" y="9" width="14" height="1" fill="#000080"/></svg>
<svg style="left:19px;top:326px;" width="8" height="8" viewBox="0 0 8 8" shape-rendering="crispEdges"><path d="M7 6.3 H1.4" stroke="#fff" stroke-width="1" shape-rendering="auto"/><path d="M7 0.3 V5.8 H1 Z" fill="#ffff00" shape-rendering="auto"/></svg>
<svg style="left:5px;top:334px;" width="20" height="18" viewBox="0 0 20 18" shape-rendering="crispEdges"><path d="M5.5 4.5 V13.5 M6 5 L13 9 M7 13 L13 9.5" stroke="#ff0000" stroke-width="1" fill="none" shape-rendering="auto"/><rect x="2.5" y="2.5" width="5" height="4" fill="#ffff00" stroke="#000"/><rect x="11.5" y="7.5" width="4" height="4" fill="#ffff00" stroke="#000"/><rect x="3.5" y="11.5" width="5" height="4" fill="#ffff00" stroke="#000"/></svg>
<svg style="left:19px;top:347px;" width="8" height="8" viewBox="0 0 8 8" shape-rendering="crispEdges"><path d="M7 6.3 H1.4" stroke="#fff" stroke-width="1" shape-rendering="auto"/><path d="M7 0.3 V5.8 H1 Z" fill="#ffff00" shape-rendering="auto"/></svg>
<svg style="left:4px;top:354px;" width="20" height="18" viewBox="0 0 20 18" shape-rendering="crispEdges"><defs><clipPath id="hc"><path d="M3 3 H17 V11 H13 V16 H3 Z"/></clipPath></defs><path d="M3.5 3.5 H17.5 V10.5 H13.5 V16.5 H3.5 Z" fill="#ffff00" stroke="#00a000" stroke-width="1"/><g clip-path="url(#hc)"><path d="M0 8 L8 0 M0 11 L11 0 M0 14 L14 0 M0 17 L17 0 M3 17 L19 1 M6 17 L20 3 M9 17 L20 6 M12 17 L20 9" stroke="#000080" stroke-width=".8" shape-rendering="auto"/></g><rect x="2" y="2" width="2" height="2" fill="#800000"/><rect x="16" y="2" width="2" height="2" fill="#800000"/><rect x="16" y="10" width="2" height="2" fill="#800000"/><rect x="12" y="9" width="2" height="2" fill="#800000"/><rect x="13" y="15" width="2" height="2" fill="#800000"/><rect x="2" y="15" width="2" height="2" fill="#800000"/></svg>
<svg style="left:19px;top:368px;" width="8" height="8" viewBox="0 0 8 8" shape-rendering="crispEdges"><path d="M7 6.3 H1.4" stroke="#fff" stroke-width="1" shape-rendering="auto"/><path d="M7 0.3 V5.8 H1 Z" fill="#ffff00" shape-rendering="auto"/></svg>
<svg style="left:4px;top:375px;" width="20" height="20" viewBox="0 0 20 20" shape-rendering="crispEdges"><path d="M2 2.5 L8 8 M9.5 9.5 L10.5 10.5 M12 12 L13 13 M14 14 L18 17.5" stroke="#000" stroke-width="1.5" fill="none" shape-rendering="auto"/></svg>
<div style="left:7px;top:399px;width:14px;height:13px;background:#000;"></div>
<div style="left:2px;top:421px;width:26px;height:226px;background:#4468b0;border-radius:2px;"></div>
<div style="left:2px;top:421px;width:25px;height:226px;background:linear-gradient(90deg,#d6e5fb 0%,#c6daf8 35%,#a3c0ee 72%,#84a7e0 100%);border-radius:2px;"></div>
<svg style="left:6px;top:424px;" width="16" height="3" viewBox="0 0 16 3" shape-rendering="crispEdges"><rect x="1" y="1" width="2" height="2" fill="#fff"/><rect x="0" y="0" width="2" height="2" fill="#27417a"/><rect x="5" y="1" width="2" height="2" fill="#fff"/><rect x="4" y="0" width="2" height="2" fill="#27417a"/><rect x="9" y="1" width="2" height="2" fill="#fff"/><rect x="8" y="0" width="2" height="2" fill="#27417a"/><rect x="13" y="1" width="2" height="2" fill="#fff"/><rect x="12" y="0" width="2" height="2" fill="#27417a"/></svg>
<div style="left:3px;top:429px;width:23px;height:21px;background:linear-gradient(90deg,#ffe9c8,#fdcf97);border:1px solid #000080;"></div>
<div class="t" style="left:5.8px;top:434.25px;font:bold 10px/11.17px 'Liberation Sans',sans-serif;color:#000080;transform:scaleX(0.7902);transform-origin:0 0;-webkit-text-stroke:.7px #000080;">OFF</div>
<svg style="left:5px;top:451px;" width="20" height="18" viewBox="0 0 20 18" shape-rendering="crispEdges"><path d="M8.5 2.5 L17.5 10.5 H14.5 V15.5 H12.5 V13.5 H10.5 V15.5 H8.5 Z" fill="#0000ff" stroke="#000080" stroke-width="1" shape-rendering="auto"/><path d="M2.5 2 V13.5 L5.3 11 V15.5 H8.5 V11 L11.5 10.8 Z" fill="#00ffff" stroke="#000080" stroke-width="1" shape-rendering="auto"/></svg>
<svg style="left:5px;top:473px;" width="20" height="18" viewBox="0 0 20 18" shape-rendering="crispEdges"><path d="M9.5 9.5 L17.5 16.5" stroke="#000" stroke-width="2.2" shape-rendering="auto"/><path d="M10 9 L18 15.8" stroke="#ff0000" stroke-width="1.3" shape-rendering="auto"/><path d="M6.5 2.3 L7.8 5.1 L11 5.4 L8.7 7.4 L9.4 10.4 L6.5 8.8 L3.6 10.4 L4.3 7.4 L2 5.4 L5.2 5.1 Z" fill="#ffff00" stroke="#000" stroke-width="1" shape-rendering="auto"/></svg>
<svg style="left:4px;top:494px;" width="20" height="17" viewBox="0 0 20 17" shape-rendering="crispEdges"><path d="M10 3.6 L16.4 12.8 H3.6 Z" fill="none" stroke="#000080" stroke-width="3.4" stroke-linejoin="round" shape-rendering="auto"/><path d="M9.4 4.6 L4.6 11.6" stroke="#ffff00" stroke-width="1.7" shape-rendering="auto"/><path d="M10.6 4.6 L15.4 11.6" stroke="#ff0000" stroke-width="1.7" shape-rendering="auto"/><path d="M5.2 12.9 H14.8" stroke="#00ffff" stroke-width="1.7"/><path d="M10 7.4 L12.3 10.8 H7.7 Z" fill="#fff" shape-rendering="auto"/></svg>
<svg style="left:8px;top:514px;" width="16" height="14" viewBox="0 0 16 14" shape-rendering="crispEdges"><rect x="5" y="6" width="9" height="1" fill="#ff0000"/><rect x="9" y="2" width="1" height="9" fill="#ff0000"/><rect x="8" y="5" width="3" height="3" fill="#ffff00"/></svg>
<div class="t" style="left:7px;top:521.58px;font:bold 9.3px/10.39px 'Liberation Sans',sans-serif;color:#000080;transform:scaleX(0.8709);transform-origin:0 0;-webkit-text-stroke:.5px #000080;">G</div>
<svg style="left:8px;top:535px;" width="16" height="16" viewBox="0 0 16 16" shape-rendering="crispEdges"><path d="M2 2 L14 14" stroke="#008080" stroke-width="1" shape-rendering="auto"/><rect x="4" y="8" width="9" height="1" fill="#ff0000"/><rect x="8" y="4" width="1" height="9" fill="#ff0000"/><rect x="7" y="7" width="3" height="3" fill="#ffff00"/></svg>
<div class="t" style="left:7px;top:542.58px;font:bold 9.3px/10.39px 'Liberation Sans',sans-serif;color:#000080;transform:scaleX(1.0562);transform-origin:0 0;-webkit-text-stroke:.5px #000080;">L</div>
<svg style="left:8px;top:556px;" width="16" height="16" viewBox="0 0 16 16" shape-rendering="crispEdges"><path d="M3 3 L14 14 M14 3 L3 14" stroke="#008080" stroke-width="1" shape-rendering="auto"/><rect x="4" y="8" width="9" height="1" fill="#ff0000"/><rect x="8" y="4" width="1" height="9" fill="#ff0000"/><rect x="7" y="7" width="3" height="3" fill="#ffff00"/></svg>
<div class="t" style="left:6.6px;top:563.58px;font:bold 9.3px/10.39px 'Liberation Sans',sans-serif;color:#000080;transform:scaleX(1.1611);transform-origin:0 0;-webkit-text-stroke:.5px #000080;">I</div>
<svg style="left:8px;top:577px;" width="16" height="16" viewBox="0 0 16 16" shape-rendering="crispEdges"><path d="M3 3 L14 14 M14 3 L3 14" stroke="#008080" stroke-width="1" shape-rendering="auto"/><rect x="4" y="8" width="9" height="1" fill="#ff0000"/><rect x="8" y="4" width="1" height="9" fill="#ff0000"/><rect x="7" y="7" width="3" height="3" fill="#ffff00"/></svg>
<div class="t" style="left:6.6px;top:584.58px;font:bold 9.3px/10.39px 'Liberation Sans',sans-serif;color:#000080;transform:scaleX(1.1611);transform-origin:0 0;-webkit-text-stroke:.5px #000080;">I</div>
<div class="t" style="left:10px;top:585.76px;font:bold 8px/8.94px 'Liberation Sans',sans-serif;color:#000080;transform:scaleX(1.1687);transform-origin:0 0;-webkit-text-stroke:.5px #000080;">2</div>
<svg style="left:4px;top:597px;" width="20" height="16" viewBox="0 0 20 16" shape-rendering="crispEdges"><path d="M2 3 Q9 5 11 9 Q13 12 18 14" fill="none" stroke="#008080" stroke-width="1" shape-rendering="auto"/><rect x="6" y="8" width="9" height="1" fill="#ff0000"/><rect x="10" y="4" width="1" height="9" fill="#ff0000"/><rect x="9" y="7" width="3" height="3" fill="#ffff00"/></svg>
<div class="t" style="left:6px;top:606.15px;font:bold 9px/10.05px 'Liberation Sans',sans-serif;color:#000080;transform:scaleX(1.0137);transform-origin:0 0;-webkit-text-stroke:.5px #000080;">M</div>
<svg style="left:4px;top:617px;" width="20" height="16" viewBox="0 0 20 16" shape-rendering="crispEdges"><rect x="6" y="8" width="9" height="1" fill="#ff0000"/><rect x="10" y="4" width="1" height="9" fill="#ff0000"/><rect x="9" y="7" width="3" height="3" fill="#ffff00"/><rect x="3" y="7" width="1" height="3" fill="#800000"/><rect x="2" y="8" width="3" height="1" fill="#800000"/><rect x="18" y="7" width="1" height="3" fill="#800000"/><rect x="17" y="8" width="3" height="1" fill="#800000"/></svg>
<div class="t" style="left:6px;top:627.15px;font:bold 9px/10.05px 'Liberation Sans',sans-serif;color:#000080;transform:scaleX(1.0718);transform-origin:0 0;-webkit-text-stroke:.5px #000080;">M2</div>
<div style="left:28px;top:111px;width:861px;height:536px;background:#f0f0f0;"></div>
<div style="left:889px;top:111px;width:22px;height:536px;background:#fafafa;"></div>
<div style="left:35px;top:118px;width:26px;height:26px;background:#f0f0f0;border-top:2px solid #fff;border-left:2px solid #fff;border-right:2px solid #a0a0a0;border-bottom:2px solid #a0a0a0;"></div>
<svg style="left:43px;top:126px;" width="10" height="10" viewBox="0 0 10 10" shape-rendering="crispEdges"><rect x="4" y="1" width="1" height="7" fill="#000090"/><rect x="1" y="4" width="7" height="1" fill="#000090"/><rect x="3" y="1" width="3" height="1" fill="#000090"/><rect x="3" y="7" width="3" height="1" fill="#000090"/><rect x="1" y="3" width="1" height="3" fill="#000090"/><rect x="7" y="3" width="1" height="3" fill="#000090"/></svg>
<div style="left:62px;top:117px;width:827px;height:28px;background:#fff;border-top:1px solid #a0a0a0;border-left:1px solid #a0a0a0;border-right:1px solid #fff;border-bottom:1px solid #fff;"></div>
<div style="left:63px;top:118px;width:825px;height:26px;border-top:1px solid #696969;border-left:1px solid #696969;border-right:1px solid #e3e3e3;border-bottom:1px solid #e3e3e3;"></div>
<svg style="left:62px;top:117px;" width="827" height="28" viewBox="0 0 827 28" shape-rendering="crispEdges"><rect x="7" y="2" width="1" height="11" fill="#000"/><rect x="23" y="2" width="1" height="11" fill="#000"/><rect x="38" y="2" width="1" height="11" fill="#000"/><rect x="53" y="2" width="1" height="11" fill="#000"/><rect x="68" y="2" width="1" height="11" fill="#000"/><rect x="84" y="2" width="1" height="11" fill="#000"/><rect x="99" y="2" width="1" height="11" fill="#000"/><rect x="114" y="2" width="1" height="11" fill="#000"/><rect x="130" y="2" width="1" height="11" fill="#000"/><rect x="145" y="2" width="1" height="11" fill="#000"/><rect x="160" y="2" width="1" height="11" fill="#000"/><rect x="176" y="2" width="1" height="11" fill="#000"/><rect x="191" y="2" width="1" height="11" fill="#000"/><rect x="206" y="2" width="1" height="11" fill="#000"/><rect x="221" y="2" width="1" height="11" fill="#000"/><rect x="237" y="2" width="1" height="11" fill="#000"/><rect x="252" y="2" width="1" height="11" fill="#000"/><rect x="267" y="2" width="1" height="11" fill="#000"/><rect x="283" y="2" width="1" height="11" fill="#000"/><rect x="298" y="2" width="1" height="11" fill="#000"/><rect x="313" y="2" width="1" height="11" fill="#000"/><rect x="329" y="2" width="1" height="11" fill="#000"/><rect x="344" y="2" width="1" height="11" fill="#000"/><rect x="359" y="2" width="1" height="11" fill="#000"/><rect x="374" y="2" width="1" height="11" fill="#000"/><rect x="390" y="2" width="1" height="11" fill="#000"/><rect x="405" y="2" width="1" height="11" fill="#000"/><rect x="420" y="2" width="1" height="11" fill="#000"/><rect x="436" y="2" width="1" height="11" fill="#000"/><rect x="451" y="2" width="1" height="11" fill="#000"/><rect x="466" y="2" width="1" height="11" fill="#000"/><rect x="482" y="2" width="1" height="11" fill="#000"/><rect x="497" y="2" width="1" height="11" fill="#000"/><rect x="512" y="2" width="1" height="11" fill="#000"/><rect x="527" y="2" width="1" height="11" fill="#000"/><rect x="543" y="2" width="1" height="11" fill="#000"/><rect x="558" y="2" width="1" height="11" fill="#000"/><rect x="573" y="2" width="1" height="11" fill="#000"/><rect x="589" y="2" width="1" height="11" fill="#000"/><rect x="604" y="2" width="1" height="11" fill="#000"/><rect x="619" y="2" width="1" height="11" fill="#000"/><rect x="635" y="2" width="1" height="11" fill="#000"/><rect x="650" y="2" width="1" height="11" fill="#000"/><rect x="665" y="2" width="1" height="11" fill="#000"/><rect x="680" y="2" width="1" height="11" fill="#000"/><rect x="696" y="2" width="1" height="11" fill="#000"/><rect x="711" y="2" width="1" height="11" fill="#000"/><rect x="726" y="2" width="1" height="11" fill="#000"/><rect x="742" y="2" width="1" height="11" fill="#000"/><rect x="757" y="2" width="1" height="11" fill="#000"/><rect x="772" y="2" width="1" height="11" fill="#000"/><rect x="788" y="2" width="1" height="11" fill="#000"/><rect x="803" y="2" width="1" height="11" fill="#000"/><rect x="818" y="2" width="1" height="11" fill="#000"/></svg>
<div class="t" style="left:77.6px;top:129.04px;font:normal 11px/12.29px 'Liberation Sans',sans-serif;color:#000;">-25</div>
<div class="t" style="left:153.6px;top:129.04px;font:normal 11px/12.29px 'Liberation Sans',sans-serif;color:#000;">-20</div>
<div class="t" style="left:230.6px;top:129.04px;font:normal 11px/12.29px 'Liberation Sans',sans-serif;color:#000;">-15</div>
<div class="t" style="left:306.6px;top:129.04px;font:normal 11px/12.29px 'Liberation Sans',sans-serif;color:#000;">-10</div>
<div class="t" style="left:386.6px;top:129.04px;font:normal 11px/12.29px 'Liberation Sans',sans-serif;color:#000;">-5</div>
<div class="t" style="left:464.4px;top:129.04px;font:normal 11px/12.29px 'Liberation Sans',sans-serif;color:#000;">0</div>
<div class="t" style="left:541.4px;top:129.04px;font:normal 11px/12.29px 'Liberation Sans',sans-serif;color:#000;">5</div>
<div class="t" style="left:614.4px;top:129.04px;font:normal 11px/12.29px 'Liberation Sans',sans-serif;color:#000;">10</div>
<div class="t" style="left:691.4px;top:129.04px;font:normal 11px/12.29px 'Liberation Sans',sans-serif;color:#000;">15</div>
<div class="t" style="left:767.4px;top:129.04px;font:normal 11px/12.29px 'Liberation Sans',sans-serif;color:#000;">20</div>
<div class="t" style="left:844.4px;top:129.04px;font:normal 11px/12.29px 'Liberation Sans',sans-serif;color:#000;">25</div>
<div style="left:605px;top:119px;width:1px;height:11px;background:#00ff00;"></div>
<div style="left:605px;top:130px;width:1px;height:12px;background:#ff00ff;"></div>
<div style="left:34px;top:146px;width:27px;height:504px;background:#fff;border-top:1px solid #a0a0a0;border-left:1px solid #a0a0a0;border-right:1px solid #fff;border-bottom:1px solid #fff;"></div>
<div style="left:35px;top:147px;width:25px;height:502px;border-top:1px solid #696969;border-left:1px solid #696969;border-right:1px solid #e3e3e3;border-bottom:1px solid #e3e3e3;"></div>
<svg style="left:34px;top:146px;" width="27" height="501" viewBox="0 0 27 501" shape-rendering="crispEdges"><rect x="2" y="494" width="13" height="1" fill="#000"/><rect x="2" y="479" width="13" height="1" fill="#000"/><rect x="2" y="463" width="13" height="1" fill="#000"/><rect x="2" y="448" width="13" height="1" fill="#000"/><rect x="2" y="433" width="13" height="1" fill="#000"/><rect x="2" y="418" width="13" height="1" fill="#000"/><rect x="2" y="402" width="13" height="1" fill="#000"/><rect x="2" y="387" width="13" height="1" fill="#000"/><rect x="2" y="372" width="13" height="1" fill="#000"/><rect x="2" y="356" width="13" height="1" fill="#000"/><rect x="2" y="341" width="13" height="1" fill="#000"/><rect x="2" y="326" width="13" height="1" fill="#000"/><rect x="2" y="310" width="13" height="1" fill="#000"/><rect x="2" y="295" width="13" height="1" fill="#000"/><rect x="2" y="280" width="13" height="1" fill="#000"/><rect x="2" y="264" width="13" height="1" fill="#000"/><rect x="2" y="249" width="13" height="1" fill="#000"/><rect x="2" y="234" width="13" height="1" fill="#000"/><rect x="2" y="219" width="13" height="1" fill="#000"/><rect x="2" y="203" width="13" height="1" fill="#000"/><rect x="2" y="188" width="13" height="1" fill="#000"/><rect x="2" y="173" width="13" height="1" fill="#000"/><rect x="2" y="157" width="13" height="1" fill="#000"/><rect x="2" y="142" width="13" height="1" fill="#000"/><rect x="2" y="127" width="13" height="1" fill="#000"/><rect x="2" y="111" width="13" height="1" fill="#000"/><rect x="2" y="96" width="13" height="1" fill="#000"/><rect x="2" y="81" width="13" height="1" fill="#000"/><rect x="2" y="66" width="13" height="1" fill="#000"/><rect x="2" y="50" width="13" height="1" fill="#000"/><rect x="2" y="35" width="13" height="1" fill="#000"/><rect x="2" y="20" width="13" height="1" fill="#000"/><rect x="2" y="4" width="13" height="1" fill="#000"/></svg>
<div class="t" style="left:56px;top:582.6px;font:11px/12.29px 'Liberation Sans',sans-serif;color:#000;transform-origin:0 0;transform:rotate(-90deg) translateY(-9.96px);">0</div>
<div class="t" style="left:56px;top:505.6px;font:11px/12.29px 'Liberation Sans',sans-serif;color:#000;transform-origin:0 0;transform:rotate(-90deg) translateY(-9.96px);">5</div>
<div class="t" style="left:56px;top:432.6px;font:11px/12.29px 'Liberation Sans',sans-serif;color:#000;transform-origin:0 0;transform:rotate(-90deg) translateY(-9.96px);">10</div>
<div class="t" style="left:56px;top:355.6px;font:11px/12.29px 'Liberation Sans',sans-serif;color:#000;transform-origin:0 0;transform:rotate(-90deg) translateY(-9.96px);">15</div>
<div class="t" style="left:56px;top:279.6px;font:11px/12.29px 'Liberation Sans',sans-serif;color:#000;transform-origin:0 0;transform:rotate(-90deg) translateY(-9.96px);">20</div>
<div class="t" style="left:56px;top:202.6px;font:11px/12.29px 'Liberation Sans',sans-serif;color:#000;transform-origin:0 0;transform:rotate(-90deg) translateY(-9.96px);">25</div>
<div style="left:36px;top:278px;width:23px;height:1px;background:#ff00ff;"></div>
<div style="left:63px;top:146px;width:807px;height:500px;border-left:1px solid #a0a0a0;"></div>
<div style="left:64px;top:147px;width:806px;height:499px;border-left:1px solid #696969;"></div>
<div style="left:63px;top:146px;width:807px;height:484px;background:#fff;border-top:1px solid #a0a0a0;border-left:1px solid #a0a0a0;"></div>
<div style="left:64px;top:147px;width:806px;height:483px;border-top:1px solid #696969;border-left:1px solid #696969;"></div>
<div style="left:85px;top:579px;width:766px;height:1px;background:#000;"></div>
<div style="left:468px;top:197px;width:1px;height:382px;background:#000;"></div>
<div style="left:269px;top:426px;width:77px;height:154px;border:1px solid #a0289a;"></div>
<svg style="left:262px;top:573px;" width="14" height="14" viewBox="0 0 14 14" shape-rendering="crispEdges"><circle cx="6.5" cy="6.5" r="5" fill="#fff" stroke="#0000ff" stroke-width="1" shape-rendering="auto"/><circle cx="6.5" cy="6.5" r="3.3" fill="#0000ff" shape-rendering="auto"/></svg>
<div class="t" style="left:228.3px;top:591.94px;font:normal 20.4px/22.79px 'Liberation Sans',sans-serif;color:#000;transform:scaleX(1.0618);transform-origin:0 0;">(-13/0)</div>
<div class="t" style="left:448.3px;top:585.94px;font:normal 20.4px/22.79px 'Liberation Sans',sans-serif;color:#000;transform:scaleX(1.0633);transform-origin:0 0;">(0/0)</div>
<div class="t" style="left:647.8px;top:532.94px;font:normal 20.4px/22.79px 'Liberation Sans',sans-serif;color:#000;transform:scaleX(1.0696);transform-origin:0 0;">(14/4)</div>
<div style="left:870px;top:147px;width:17px;height:310px;background-image:conic-gradient(#fff 25%,#f0f0f0 0 50%,#fff 0 75%,#f0f0f0 0);background-size:2px 2px;"></div>
<div style="left:870px;top:147px;width:17px;height:17px;background:#f0f0f0;border-top:1px solid #e3e3e3;border-left:1px solid #e3e3e3;border-right:1px solid #696969;border-bottom:1px solid #696969;"></div>
<div style="left:871px;top:148px;width:15px;height:15px;border-top:1px solid #fff;border-left:1px solid #fff;border-right:1px solid #a0a0a0;border-bottom:1px solid #a0a0a0;"></div>
<svg style="left:874px;top:152px;" width="9" height="6" viewBox="0 0 9 6" shape-rendering="crispEdges"><path d="M1 5 H8 L4.5 1 Z" fill="#000" shape-rendering="auto"/></svg>
<div style="left:870px;top:253px;width:17px;height:99px;background:#f0f0f0;border-top:1px solid #e3e3e3;border-left:1px solid #e3e3e3;border-right:1px solid #696969;border-bottom:1px solid #696969;"></div>
<div style="left:871px;top:254px;width:15px;height:97px;border-top:1px solid #fff;border-left:1px solid #fff;border-right:1px solid #a0a0a0;border-bottom:1px solid #a0a0a0;"></div>
<div style="left:870px;top:440px;width:17px;height:17px;background:#f0f0f0;border-top:1px solid #e3e3e3;border-left:1px solid #e3e3e3;border-right:1px solid #696969;border-bottom:1px solid #696969;"></div>
<div style="left:871px;top:441px;width:15px;height:15px;border-top:1px solid #fff;border-left:1px solid #fff;border-right:1px solid #a0a0a0;border-bottom:1px solid #a0a0a0;"></div>
<svg style="left:874px;top:446px;" width="9" height="6" viewBox="0 0 9 6" shape-rendering="crispEdges"><path d="M1 1 H8 L4.5 5 Z" fill="#000" shape-rendering="auto"/></svg>
<div style="left:870px;top:457px;width:17px;height:190px;background:#f0f0f0;"></div>
<div style="left:870px;top:457px;width:1px;height:168px;background:#fff;"></div>
<div style="left:870px;top:472px;width:17px;height:1px;background:#a0a0a0;"></div>
<div style="left:870px;top:473px;width:17px;height:1px;background:#696969;"></div>
<div style="left:871px;top:474px;width:16px;height:1px;background:#fff;"></div>
<div style="left:870px;top:491px;width:17px;height:1px;background:#a0a0a0;"></div>
<div style="left:870px;top:492px;width:17px;height:1px;background:#696969;"></div>
<div style="left:871px;top:493px;width:16px;height:1px;background:#fff;"></div>
<div style="left:870px;top:510px;width:17px;height:1px;background:#a0a0a0;"></div>
<div style="left:870px;top:511px;width:17px;height:1px;background:#696969;"></div>
<div style="left:871px;top:512px;width:16px;height:1px;background:#fff;"></div>
<div style="left:870px;top:529px;width:17px;height:1px;background:#a0a0a0;"></div>
<div style="left:870px;top:530px;width:17px;height:1px;background:#696969;"></div>
<div style="left:871px;top:531px;width:16px;height:1px;background:#fff;"></div>
<div style="left:870px;top:548px;width:17px;height:1px;background:#a0a0a0;"></div>
<div style="left:870px;top:549px;width:17px;height:1px;background:#696969;"></div>
<div style="left:871px;top:550px;width:16px;height:1px;background:#fff;"></div>
<div style="left:870px;top:567px;width:17px;height:1px;background:#a0a0a0;"></div>
<div style="left:870px;top:568px;width:17px;height:1px;background:#696969;"></div>
<div style="left:871px;top:569px;width:16px;height:1px;background:#fff;"></div>
<div style="left:870px;top:586px;width:17px;height:1px;background:#a0a0a0;"></div>
<div style="left:870px;top:587px;width:17px;height:1px;background:#696969;"></div>
<div style="left:871px;top:588px;width:16px;height:1px;background:#fff;"></div>
<div style="left:870px;top:605px;width:17px;height:1px;background:#a0a0a0;"></div>
<div style="left:870px;top:606px;width:17px;height:1px;background:#696969;"></div>
<div style="left:871px;top:607px;width:16px;height:1px;background:#fff;"></div>
<div style="left:870px;top:624px;width:17px;height:1px;background:#a0a0a0;"></div>
<div style="left:870px;top:625px;width:17px;height:1px;background:#696969;"></div>
<svg style="left:872px;top:458px;" width="15" height="13" viewBox="0 0 15 13" shape-rendering="crispEdges"><rect x="1.5" y="1.5" width="12" height="10" fill="#fff" stroke="#000"/><path d="M3 3 L12 10 M12 3 L3 10" stroke="#ff0000" stroke-width="1" shape-rendering="auto"/></svg>
<svg style="left:872px;top:476px;" width="16" height="15" viewBox="0 0 16 15" shape-rendering="crispEdges"><rect x="4" y="1" width="1" height="13" fill="#000"/><rect x="8" y="1" width="1" height="13" fill="#000"/><rect x="12" y="1" width="1" height="13" fill="#000"/><rect x="1" y="3" width="14" height="1" fill="#000"/><rect x="1" y="7" width="14" height="1" fill="#000"/><rect x="1" y="11" width="14" height="1" fill="#000"/></svg>
<svg style="left:872px;top:495px;" width="16" height="15" viewBox="0 0 16 15" shape-rendering="crispEdges"><path d="M5.5 1 V5.5 H1 M10.5 1 V5.5 H15 M5.5 14 V9.5 H1 M10.5 14 V9.5 H15" fill="none" stroke="#000" stroke-width="1"/><rect x="6" y="1" width="4" height="13" fill="#ffff00"/><rect x="1" y="6" width="14" height="3" fill="#ffff00"/></svg>
<svg style="left:871px;top:512px;" width="17" height="18" viewBox="0 0 17 18" shape-rendering="crispEdges"><circle cx="8" cy="8.6" r="5.4" fill="none" stroke="#000" stroke-width="1.3" shape-rendering="auto"/><path d="M12 12.6 L15.2 15.6" stroke="#000" stroke-width="2" shape-rendering="auto"/><path d="M5.5 5.5 H8.5 L10.5 7.5 V11.5 H5.5 Z" fill="#fff" stroke="#000" stroke-width="1" shape-rendering="auto"/></svg>
<svg style="left:871px;top:531px;" width="17" height="18" viewBox="0 0 17 18" shape-rendering="crispEdges"><circle cx="8" cy="8.6" r="5.4" fill="none" stroke="#000" stroke-width="1.3" shape-rendering="auto"/><path d="M12 12.6 L15.2 15.6" stroke="#000" stroke-width="2" shape-rendering="auto"/><rect x="5.5" y="6.5" width="5" height="4" fill="#fff" stroke="#000"/></svg>
<svg style="left:871px;top:550px;" width="17" height="18" viewBox="0 0 17 18" shape-rendering="crispEdges"><circle cx="8" cy="8.6" r="5.4" fill="none" stroke="#000" stroke-width="1.3" shape-rendering="auto"/><path d="M12 12.6 L15.2 15.6" stroke="#000" stroke-width="2" shape-rendering="auto"/><rect x="5" y="8" width="6" height="1" fill="#000"/><rect x="8" y="6" width="1" height="5" fill="#000"/></svg>
<svg style="left:871px;top:569px;" width="17" height="18" viewBox="0 0 17 18" shape-rendering="crispEdges"><circle cx="8" cy="8.6" r="5.4" fill="none" stroke="#000" stroke-width="1.3" shape-rendering="auto"/><path d="M12 12.6 L15.2 15.6" stroke="#000" stroke-width="2" shape-rendering="auto"/><rect x="5" y="8" width="6" height="1" fill="#000"/></svg>
<svg style="left:871px;top:588px;" width="17" height="18" viewBox="0 0 17 18" shape-rendering="crispEdges"><circle cx="8" cy="8.6" r="5.4" fill="none" stroke="#000" stroke-width="1.3" shape-rendering="auto"/><path d="M12 12.6 L15.2 15.6" stroke="#000" stroke-width="2" shape-rendering="auto"/><path d="M6 10.5 Q11 12 10.5 8 Q10 5.5 7 6.5" fill="none" stroke="#000090" stroke-width="1.2" shape-rendering="auto"/><path d="M5 5 V9 H9 Z" fill="#000090" shape-rendering="auto"/></svg>
<svg style="left:871px;top:607px;" width="17" height="18" viewBox="0 0 17 18" shape-rendering="crispEdges"><circle cx="8" cy="8.6" r="5.4" fill="none" stroke="#a0a0a0" stroke-width="1.3" shape-rendering="auto"/><path d="M12 12.6 L15.2 15.6" stroke="#a0a0a0" stroke-width="2" shape-rendering="auto"/><path d="M10 10.5 Q5 12 5.5 8 Q6 5.5 9 6.5" fill="none" stroke="#a0a0a0" stroke-width="1.2" shape-rendering="auto"/><path d="M11 5 V9 H7 Z" fill="#a0a0a0" shape-rendering="auto"/></svg>
<div style="left:63px;top:645px;width:807px;height:2px;background:#fff;"></div>
<div style="left:242px;top:628px;width:611px;height:17px;background-image:conic-gradient(#fff 25%,#f0f0f0 0 50%,#fff 0 75%,#f0f0f0 0);background-size:2px 2px;"></div>
<div style="left:66px;top:629px;width:19px;height:17px;background:#f0f0f0;border-left:1px solid #fff;border-top:1px solid #fff;border-right:2px solid #a0a0a0;border-bottom:2px solid #a0a0a0;"></div>
<svg style="left:67px;top:630px;" width="15" height="15" viewBox="0 0 15 15" shape-rendering="crispEdges"><g transform="rotate(0 7.5 7.5)" shape-rendering="auto"><path d="M7.5 3 V13" stroke="#808080" stroke-width="1"/><path d="M7.5 1.8 L5.7 6 H9.3 Z" fill="#808080"/></g></svg>
<div style="left:86px;top:629px;width:19px;height:17px;background:#f0f0f0;border-left:1px solid #fff;border-top:1px solid #fff;border-right:2px solid #a0a0a0;border-bottom:2px solid #a0a0a0;"></div>
<svg style="left:87px;top:630px;" width="15" height="15" viewBox="0 0 15 15" shape-rendering="crispEdges"><g transform="rotate(90 7.5 7.5)" shape-rendering="auto"><path d="M7.5 3 V13" stroke="#808080" stroke-width="1"/><path d="M7.5 1.8 L5.7 6 H9.3 Z" fill="#808080"/></g></svg>
<div style="left:106px;top:629px;width:19px;height:17px;background:#f0f0f0;border-left:1px solid #fff;border-top:1px solid #fff;border-right:2px solid #a0a0a0;border-bottom:2px solid #a0a0a0;"></div>
<svg style="left:107px;top:630px;" width="15" height="15" viewBox="0 0 15 15" shape-rendering="crispEdges"><g transform="rotate(65 7.5 7.5)" shape-rendering="auto"><path d="M7.5 3 V13" stroke="#808080" stroke-width="1"/><path d="M7.5 1.8 L5.7 6 H9.3 Z" fill="#808080"/></g></svg>
<div style="left:126px;top:629px;width:19px;height:17px;background:#f0f0f0;border-left:1px solid #fff;border-top:1px solid #fff;border-right:2px solid #a0a0a0;border-bottom:2px solid #a0a0a0;"></div>
<svg style="left:127px;top:630px;" width="15" height="15" viewBox="0 0 15 15" shape-rendering="crispEdges"><g transform="rotate(45 7.5 7.5)" shape-rendering="auto"><path d="M7.5 3 V13" stroke="#808080" stroke-width="1"/><path d="M7.5 1.8 L5.7 6 H9.3 Z" fill="#808080"/></g></svg>
<div style="left:146px;top:629px;width:19px;height:17px;background:#f0f0f0;border-left:1px solid #fff;border-top:1px solid #fff;border-right:2px solid #a0a0a0;border-bottom:2px solid #a0a0a0;"></div>
<svg style="left:147px;top:630px;" width="15" height="15" viewBox="0 0 15 15" shape-rendering="crispEdges"><g transform="rotate(22 7.5 7.5)" shape-rendering="auto"><path d="M7.5 3 V13" stroke="#808080" stroke-width="1"/><path d="M7.5 1.8 L5.7 6 H9.3 Z" fill="#808080"/></g></svg>
<div style="left:166px;top:629px;width:19px;height:17px;background:#f0f0f0;border-left:1px solid #fff;border-top:1px solid #fff;border-right:2px solid #a0a0a0;border-bottom:2px solid #a0a0a0;"></div>
<svg style="left:167px;top:630px;" width="15" height="15" viewBox="0 0 15 15" shape-rendering="crispEdges"><g transform="rotate(-22 7.5 7.5)" shape-rendering="auto"><path d="M7.5 3 V13" stroke="#808080" stroke-width="1"/><path d="M7.5 1.8 L5.7 6 H9.3 Z" fill="#808080"/></g></svg>
<div style="left:186px;top:629px;width:19px;height:17px;background:#f0f0f0;border-left:1px solid #fff;border-top:1px solid #fff;border-right:2px solid #a0a0a0;border-bottom:2px solid #a0a0a0;"></div>
<svg style="left:187px;top:630px;" width="15" height="15" viewBox="0 0 15 15" shape-rendering="crispEdges"><g transform="rotate(-45 7.5 7.5)" shape-rendering="auto"><path d="M7.5 3 V13" stroke="#808080" stroke-width="1"/><path d="M7.5 1.8 L5.7 6 H9.3 Z" fill="#808080"/></g></svg>
<div style="left:206px;top:629px;width:19px;height:17px;background:#f0f0f0;border-left:1px solid #fff;border-top:1px solid #fff;border-right:2px solid #a0a0a0;border-bottom:2px solid #a0a0a0;"></div>
<svg style="left:207px;top:630px;" width="15" height="15" viewBox="0 0 15 15" shape-rendering="crispEdges"><g transform="rotate(-65 7.5 7.5)" shape-rendering="auto"><path d="M7.5 3 V13" stroke="#808080" stroke-width="1"/><path d="M7.5 1.8 L5.7 6 H9.3 Z" fill="#808080"/></g></svg>
<div style="left:225px;top:628px;width:17px;height:17px;background:#f0f0f0;border-top:1px solid #e3e3e3;border-left:1px solid #e3e3e3;border-right:1px solid #696969;border-bottom:1px solid #696969;"></div>
<div style="left:226px;top:629px;width:15px;height:15px;border-top:1px solid #fff;border-left:1px solid #fff;border-right:1px solid #a0a0a0;border-bottom:1px solid #a0a0a0;"></div>
<svg style="left:229px;top:632px;" width="7" height="9" viewBox="0 0 7 9" shape-rendering="crispEdges"><path d="M5.3 1 V8 L1 4.5 Z" fill="#000" shape-rendering="auto"/></svg>
<div style="left:444px;top:628px;width:207px;height:17px;background:#f0f0f0;border-top:1px solid #e3e3e3;border-left:1px solid #e3e3e3;border-right:1px solid #696969;border-bottom:1px solid #696969;"></div>
<div style="left:445px;top:629px;width:205px;height:15px;border-top:1px solid #fff;border-left:1px solid #fff;border-right:1px solid #a0a0a0;border-bottom:1px solid #a0a0a0;"></div>
<div style="left:853px;top:628px;width:17px;height:17px;background:#f0f0f0;border-top:1px solid #e3e3e3;border-left:1px solid #e3e3e3;border-right:1px solid #696969;border-bottom:1px solid #696969;"></div>
<div style="left:854px;top:629px;width:15px;height:15px;border-top:1px solid #fff;border-left:1px solid #fff;border-right:1px solid #a0a0a0;border-bottom:1px solid #a0a0a0;"></div>
<svg style="left:859px;top:632px;" width="7" height="9" viewBox="0 0 7 9" shape-rendering="crispEdges"><path d="M1.5 1 V8 L5.8 4.5 Z" fill="#000" shape-rendering="auto"/></svg>
<div style="left:891px;top:113px;width:21px;height:57px;background:linear-gradient(90deg,#f0f0f0,#fbfbfb 60%,#fff);border:1px solid #919191;border-right:none;border-radius:5px 0 0 5px;"></div>
<div class="t" style="left:897px;top:119px;font:12px/13.4px 'Liberation Sans',sans-serif;color:#525252;transform-origin:0 0;transform:rotate(90deg) translateY(-11.2px) scaleX(0.9920);">Themes</div>
<div style="left:891px;top:183px;width:21px;height:75px;background:linear-gradient(90deg,#f0f0f0,#fbfbfb 60%,#fff);border:1px solid #919191;border-right:none;border-radius:5px 0 0 5px;"></div>
<div class="t" style="left:897px;top:189px;font:12px/13.4px 'Liberation Sans',sans-serif;color:#525252;transform-origin:0 0;transform:rotate(90deg) translateY(-11.2px) scaleX(0.9941);">Strukturinfo</div>
<div style="left:911px;top:114px;width:27px;height:286px;background:#5b80c4;border-radius:3px 0 0 3px;"></div>
<div style="left:911px;top:114px;width:26px;height:286px;background:linear-gradient(90deg,#d2e2fb 0%,#c0d5f7 35%,#9ebcec 75%,#7a9ddb 100%);border-radius:3px 0 0 3px;"></div>
<svg style="left:916px;top:117px;" width="16" height="3" viewBox="0 0 16 3" shape-rendering="crispEdges"><rect x="1" y="1" width="2" height="2" fill="#fff"/><rect x="0" y="0" width="2" height="2" fill="#27417a"/><rect x="5" y="1" width="2" height="2" fill="#fff"/><rect x="4" y="0" width="2" height="2" fill="#27417a"/><rect x="9" y="1" width="2" height="2" fill="#fff"/><rect x="8" y="0" width="2" height="2" fill="#27417a"/><rect x="13" y="1" width="2" height="2" fill="#fff"/><rect x="12" y="0" width="2" height="2" fill="#27417a"/></svg>
<div style="left:917px;top:126px;width:14px;height:13px;background:#000000;"></div>
<div style="left:917px;top:147px;width:14px;height:13px;background:#dc0000;"></div>
<div style="left:917px;top:168px;width:14px;height:13px;background:#e87400;"></div>
<div style="left:917px;top:189px;width:14px;height:13px;background:#f4dc00;"></div>
<div style="left:917px;top:210px;width:14px;height:13px;background:#30b818;"></div>
<div style="left:917px;top:231px;width:14px;height:13px;background:#00d8d8;"></div>
<div style="left:917px;top:252px;width:14px;height:13px;background:#0000d4;"></div>
<div style="left:917px;top:273px;width:14px;height:13px;background:#d000d8;"></div>
<div style="left:917px;top:292px;width:15px;height:1px;background:#6a8ccb;"></div>
<div style="left:918px;top:293px;width:15px;height:1px;background:#fff;"></div>
<div style="left:917px;top:319px;width:15px;height:1px;background:#6a8ccb;"></div>
<div style="left:918px;top:320px;width:15px;height:1px;background:#fff;"></div>
<div style="left:917px;top:346px;width:15px;height:1px;background:#6a8ccb;"></div>
<div style="left:918px;top:347px;width:15px;height:1px;background:#fff;"></div>
<div style="left:917px;top:373px;width:15px;height:1px;background:#6a8ccb;"></div>
<div style="left:918px;top:374px;width:15px;height:1px;background:#fff;"></div>
<div style="left:916px;top:299px;width:16px;height:15px;background:#c0c0c0;"></div>
<svg style="left:918px;top:301px;" width="12" height="11" viewBox="0 0 12 11" shape-rendering="crispEdges"><rect x="5" y="0" width="1" height="1" fill="#000"/><rect x="5" y="1" width="2" height="1" fill="#000"/><rect x="4" y="2" width="1" height="1" fill="#000"/><rect x="6" y="2" width="1" height="1" fill="#000"/><rect x="4" y="3" width="1" height="1" fill="#000"/><rect x="6" y="3" width="2" height="1" fill="#000"/><rect x="3" y="4" width="1" height="1" fill="#000"/><rect x="7" y="4" width="1" height="1" fill="#000"/><rect x="3" y="5" width="1" height="1" fill="#000"/><rect x="7" y="5" width="2" height="1" fill="#000"/><rect x="2" y="6" width="1" height="1" fill="#000"/><rect x="8" y="6" width="1" height="1" fill="#000"/><rect x="2" y="7" width="8" height="1" fill="#000"/><rect x="1" y="8" width="1" height="1" fill="#000"/><rect x="9" y="8" width="1" height="1" fill="#000"/><rect x="1" y="9" width="1" height="1" fill="#000"/><rect x="9" y="9" width="2" height="1" fill="#000"/><rect x="0" y="10" width="3" height="1" fill="#000"/><rect x="8" y="10" width="4" height="1" fill="#000"/></svg>
<svg style="left:916px;top:326px;" width="17" height="15" viewBox="0 0 17 15" shape-rendering="crispEdges"><rect x="0" y="0" width="16" height="15" fill="#c0c0c0"/><path d="M0.5 5.5 Q0.5 4.5 1.5 4.5 H15.5 V8.5 H14 L10.5 12.5 H8.5 Q6.5 12.5 6.5 10.5 V7.5 H1.5 Q0.5 7.5 0.5 6.5 Z" fill="#fff" stroke="#000" stroke-width="1" shape-rendering="auto"/><path d="M6.5 7.5 H10.5 M8 8 V10.5 H10 L10.5 8" fill="none" stroke="#000" stroke-width=".9" shape-rendering="auto"/></svg>
<svg style="left:916px;top:352px;" width="17" height="17" viewBox="0 0 17 17" shape-rendering="crispEdges"><rect x="0" y="1" width="16" height="15" fill="#c0c0c0"/><path d="M2 7 Q1 2.5 7 2 Q13 1.5 13.5 6 Q14 9 11 10.5 Q13 13 9 14.5 Q4.5 15.5 3.5 12 Q6 10 2 7 Z" fill="#ffee00" stroke="#000" stroke-width="1" shape-rendering="auto"/><path d="M14.5 1 L15.5 2 L8 11 L6.5 10 Z" fill="#c0a060" stroke="#000" stroke-width=".7" shape-rendering="auto"/><rect x="4" y="4" width="2" height="2" fill="#ff0000"/><rect x="7" y="3" width="2" height="2" fill="#00c000"/><rect x="5" y="7" width="2" height="2" fill="#00c8ff"/><rect x="10" y="5" width="2" height="2" fill="#ff0000"/><rect x="8" y="11" width="3" height="2" fill="#ff0000"/><rect x="5" y="12" width="2" height="2" fill="#800000"/><path d="M3 16 L7 10" stroke="#800000" stroke-width="1.6" shape-rendering="auto"/></svg>
<svg style="left:916px;top:380px;" width="17" height="16" viewBox="0 0 17 16" shape-rendering="crispEdges"><rect x="0" y="0" width="16" height="15" fill="#c0c0c0"/><rect x="1.5" y="5.5" width="4" height="5" fill="#a0a0a0" stroke="#000"/><rect x="3.5" y="7.5" width="4" height="5" fill="#008080" stroke="#000"/><rect x="5.5" y="9.5" width="4" height="5" fill="#fff" stroke="#000"/><rect x="9" y="0" width="7" height="7" fill="#000"/><rect x="10" y="1" width="2" height="2" fill="#ff0000"/><rect x="13" y="1" width="2" height="2" fill="#ffff00"/><rect x="10" y="4" width="2" height="2" fill="#00ffff"/><rect x="13" y="4" width="2" height="2" fill="#00e000"/><rect x="13" y="9" width="1" height="1" fill="#000080"/><rect x="12" y="10" width="3" height="1" fill="#000080"/><rect x="11" y="11" width="5" height="1" fill="#000080"/><rect x="12" y="12" width="3" height="3" fill="#000080"/></svg>
<div style="left:1px;top:647px;width:937px;height:20px;background:#f0f0f0;"></div>
<div style="left:1px;top:647px;width:937px;height:1px;background:#e2e2e2;"></div>
<div style="left:911px;top:400px;width:27px;height:247px;background:linear-gradient(90deg,#c2d8fa,#c6dbfb);"></div>
<div class="t" style="left:3.0px;top:652.34px;font:normal 12px/13.40px 'Liberation Sans',sans-serif;color:#000;transform:scaleX(1.0122);transform-origin:0 0;">2-D Fang-/Markiermodus</div>
<div style="left:562px;top:649px;width:1px;height:17px;background:#d7d7d7;"></div>
<div style="left:603px;top:649px;width:1px;height:17px;background:#d7d7d7;"></div>
<div style="left:660px;top:649px;width:1px;height:17px;background:#d7d7d7;"></div>
<div style="left:750px;top:649px;width:1px;height:17px;background:#d7d7d7;"></div>
<div style="left:816px;top:649px;width:1px;height:17px;background:#d7d7d7;"></div>
<div class="t" style="left:519px;top:652.34px;font:normal 12px/13.40px 'Liberation Sans',sans-serif;color:#000;transform:scaleX(0.8949);transform-origin:0 0;">Keine Ei</div>
<div class="t" style="left:568.4px;top:652.34px;font:normal 12px/13.40px 'Liberation Sans',sans-serif;color:#000;transform:scaleX(0.8754);transform-origin:0 0;">AUS</div>
<div class="t" style="left:609.3px;top:652.34px;font:normal 12px/13.40px 'Liberation Sans',sans-serif;color:#000;transform:scaleX(0.8990);transform-origin:0 0;">0</div>
<div class="t" style="left:666.8px;top:652.34px;font:normal 12px/13.40px 'Liberation Sans',sans-serif;color:#000;transform:scaleX(0.8862);transform-origin:0 0;">191%</div>
<div class="t" style="left:758.6px;top:652.34px;font:normal 12px/13.40px 'Liberation Sans',sans-serif;color:#9a9a9a;transform:scaleX(0.8123);transform-origin:0 0;">PKT SETZ</div>
<div class="t" style="left:828.5px;top:652.34px;font:normal 12px/13.40px 'Liberation Sans',sans-serif;color:#000;transform:scaleX(0.8879);transform-origin:0 0;">KP STANDARD</div>
<svg style="left:924px;top:654px;" width="12" height="12" viewBox="0 0 12 12" shape-rendering="crispEdges"><rect x="9" y="1" width="2" height="2" fill="#b8b8b8"/><rect x="5" y="5" width="2" height="2" fill="#b8b8b8"/><rect x="9" y="5" width="2" height="2" fill="#b8b8b8"/><rect x="1" y="9" width="2" height="2" fill="#b8b8b8"/><rect x="5" y="9" width="2" height="2" fill="#b8b8b8"/><rect x="9" y="9" width="2" height="2" fill="#b8b8b8"/></svg>
</body></html>
